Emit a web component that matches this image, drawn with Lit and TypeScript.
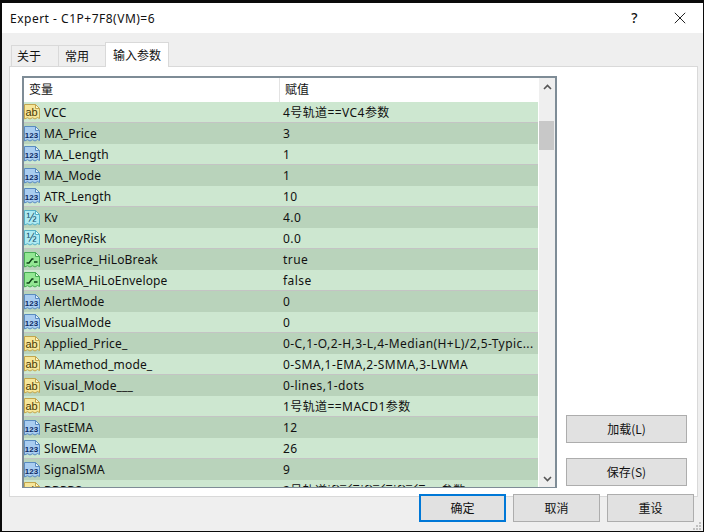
import { LitElement, html, css, svg } from "lit";
import { customElement } from "lit/decorators.js";

type Kind = "ab" | "123" | "half" | "bool";
const rows: [Kind, string, string][] = [
  ["ab", "VCC", "4号轨道==VC4参数"],
  ["123", "MA_Price", "3"],
  ["123", "MA_Length", "1"],
  ["123", "MA_Mode", "1"],
  ["123", "ATR_Length", "10"],
  ["half", "Kv", "4.0"],
  ["half", "MoneyRisk", "0.0"],
  ["bool", "usePrice_HiLoBreak", "true"],
  ["bool", "useMA_HiLoEnvelope", "false"],
  ["123", "AlertMode", "0"],
  ["123", "VisualMode", "0"],
  ["ab", "Applied_Price_", "0-C,1-O,2-H,3-L,4-Median(H+L)/2,5-Typic..."],
  ["ab", "MAmethod_mode_", "0-SMA,1-EMA,2-SMMA,3-LWMA"],
  ["ab", "Visual_Mode___", "0-lines,1-dots"],
  ["ab", "MACD1", "1号轨道==MACD1参数"],
  ["123", "FastEMA", "12"],
  ["123", "SlowEMA", "26"],
  ["123", "SignalSMA", "9"],
  ["ab", "BBPBS", "2号轨道if运行if运行if运行==参数"],
];

const palette: Record<Kind, [string, string, string, string]> = {
  ab: ["#f6e69a", "#fff6cc", "#c2a64e", "#4a3a05"],
  "123": ["#a9cdf0", "#e2f0fc", "#5a8cc0", "#0e2c66"],
  half: ["#aeeaf2", "#e4fafc", "#56b0c6", "#0f4a68"],
  bool: ["#93e793", "#dcfadc", "#48ab55", "#0c3f16"],
};

function icon(kind: Kind) {
  const [a, b, line, ink] = palette[kind];
  const body = svg`<path d="M.5 .5H11.5L15.5 4.5V14.5L13.5 13.5L11 15L8.5 13.7L6 15L3.5 13.7L.5 15Z" fill="${a}" stroke="${line}"/>
    <path d="M11.5 .5V4.5H15.5Z" fill="${b}" stroke="${line}"/>`;
  let glyph;
  if (kind === "bool") {
    glyph = svg`<path d="M2.5 11H5L8 7H9.5M10 10H13.5" fill="none" stroke="${ink}" stroke-width="1.3"/>`;
  } else {
    const label = kind === "ab" ? "ab" : kind === "123" ? "123" : "½";
    glyph = svg`<text x="7.5" y="11.5" text-anchor="middle" font-family="Liberation Sans, sans-serif"
      font-size="${kind === "ab" ? 11 : kind === "123" ? 8 : 12}" font-weight="${kind === "123" ? 700 : 400}" fill="${ink}">${label}</text>`;
  }
  return html`<svg class="ic" width="16" height="16" viewBox="0 0 16 16">${body}${glyph}</svg>`;
}

@customElement("app-root")
export class AppRoot extends LitElement {
  static styles = css`
    :host {
      display: block;
      width: 704px;
      height: 532px;
      background: #0a0a0a;
      font-family: "Noto Sans CJK SC", "Noto Sans", sans-serif;
      font-size: 12px;
      color: #111;
      box-sizing: border-box;
      padding: 3px 1px 1px 2px;
      overflow: hidden;
    }
    .win {
      width: 100%;
      height: 100%;
      background: #efefef;
      display: flex;
      flex-direction: column;
      position: relative;
    }
    .title {
      height: 30px;
      flex: none;
      background: #fff;
      display: flex;
      align-items: center;
      padding-left: 8px;
      font-family: "Noto Sans", sans-serif;
      font-size: 12px;
    }
    .title .t { flex: 1; letter-spacing: 0.5px; }
    .q { width: 46px; padding: 0 1px 2px 2px; box-sizing: border-box; text-align: center; font-size: 14px; font-weight: 500; }
    .x { width: 46px; display: flex; justify-content: center; }
    .tabs {
      display: flex;
      height: 33px;
      flex: none;
      padding: 9px 0 0 9px;
      box-sizing: border-box;
      align-items: flex-end;
    }
    .tab {
      width: 48px;
      height: 21px;
      border: 1px solid #d9d9d9;
      border-bottom: none;
      box-sizing: border-box;
      display: flex;
      align-items: center;
      margin-right: -1px;
      background: #efefef;
      padding: 0 0 2px 5px;
    }
    .tab.second { padding-left: 6px; }
    .tab.a {
      width: 64px;
      height: 25px;
      background: #fff;
      margin-bottom: -1px;
      position: relative;
      z-index: 1;
      padding-left: 7px;
    }
    .panel {
      flex: none;
      height: 431px;
      margin-left: 7px;
      margin-right: 5px;
      background: #fff;
      border: 1px solid #d9d9d9;
      box-sizing: border-box;
      padding: 9px 12px 8px 12px;
      display: flex;
      gap: 9px;
    }
    .list {
      width: 535px;
      height: 412px;
      flex: none;
      border: 2px solid #7e8c96;
      border-bottom-width: 1px;
      box-sizing: border-box;
      display: flex;
      overflow: hidden;
    }
    .grid { flex: 1; min-width: 0; overflow: hidden; }
    .head {
      height: 24px;
      display: grid;
      grid-template-columns: 255px 1fr;
      background: #fff;
      align-items: center;
    }
    .head div {
      padding: 0 0 4px 5px;
      height: 100%;
      box-sizing: border-box;
      display: flex;
      align-items: center;
    }
    .head div + div { border-left: 1px solid #e3e3e3; }
    .row {
      height: 20px;
      display: grid;
      grid-template-columns: 258px 1fr;
      align-items: center;
      background: #cde7d0;
      white-space: nowrap;
      overflow: hidden;
    }
    .row.alt { height: 22px; background: #b9d3bb; border-top: 1px solid #c4c4c4; box-sizing: border-box; }
    .name { display: flex; align-items: center; gap: 4px; }
    .name span { font-family: "Noto Sans", sans-serif; letter-spacing: 0.15px; }
    .val {
      padding-left: 1px;
      font-family: "Noto Sans", "Noto Sans CJK SC", sans-serif;
      letter-spacing: 0.42px;
    }
    .ic { flex: none; }
    .sb {
      width: 17px;
      background: #efefef;
      flex: none;
      position: relative;
      border-left: 1px solid #fff;
      box-sizing: border-box;
      display: flex;
      flex-direction: column;
      justify-content: space-between;
    }
    .sb .arrow { height: 17px; display: flex; align-items: center; justify-content: center; }
    .sb .thumb {
      position: absolute;
      left: 0;
      right: 1px;
      top: 43px;
      height: 29px;
      background: #c8c8c8;
    }
    .side {
      flex: 1;
      display: flex;
      flex-direction: column;
      justify-content: flex-end;
      gap: 15px;
      padding-bottom: 2px;
    }
    .btn {
      width: 121px;
      height: 28px;
      background: #e1e1e1;
      border: 1px solid #adadad;
      box-sizing: border-box;
      display: flex;
      align-items: center;
      justify-content: center;
      padding-bottom: 2px;
    }
    .foot {
      display: flex;
      justify-content: flex-end;
      gap: 7px;
      padding-right: 9px;
      margin-top: -3px;
      position: relative;
      z-index: 1;
    }
    .foot .btn { width: 87px; height: 28px; }
    .foot .btn.def { border: 2px solid #0078d7; }
    .grip { position: absolute; right: 2px; bottom: 1px; display: block; }
  `;

  render() {
    return html`
      <div class="win">
        <div class="title">
          <div class="t">Expert - C1P+7F8(VM)=6</div>
          <div class="q">?</div>
          <div class="x">
            <svg width="12" height="12" viewBox="0 0 12 12"><path d="M.8 .8L11.2 11.2M11.2 .8L.8 11.2" stroke="#222" fill="none"/></svg>
          </div>
        </div>
        <div class="tabs">
          <div class="tab">关于</div>
          <div class="tab second">常用</div>
          <div class="tab a">输入参数</div>
        </div>
        <div class="panel">
          <div class="list">
            <div class="grid">
              <div class="head"><div>变量</div><div>赋值</div></div>
              ${rows.map(
                ([k, n, v], i) => html`<div class="row ${i % 2 ? "alt" : ""}">
                  <div class="name">${icon(k)}<span>${n}</span></div>
                  <div class="val">${v}</div>
                </div>`
              )}
            </div>
            <div class="sb">
              <div class="arrow"><svg width="9" height="6" viewBox="0 0 9 6"><path d="M1 5L4.5 1.5L8 5" stroke="#555" stroke-width="1.6" fill="none"/></svg></div>
              <div class="thumb"></div>
              <div class="arrow"><svg width="9" height="6" viewBox="0 0 9 6"><path d="M1 1L4.5 4.5L8 1" stroke="#555" stroke-width="1.6" fill="none"/></svg></div>
            </div>
          </div>
          <div class="side">
            <div class="btn">加载(L)</div>
            <div class="btn">保存(S)</div>
          </div>
        </div>
        <div class="foot">
          <div class="btn def">确定</div>
          <div class="btn">取消</div>
          <div class="btn">重设</div>
        </div>
        <svg class="grip" width="8" height="8" viewBox="0 0 8 8" fill="#c0c0c0">
          <rect x="6" y="0" width="2" height="2"/>
          <rect x="3" y="3" width="2" height="2"/><rect x="6" y="3" width="2" height="2"/>
          <rect x="0" y="6" width="2" height="2"/><rect x="3" y="6" width="2" height="2"/><rect x="6" y="6" width="2" height="2"/>
        </svg>
      </div>
    `;
  }
}
